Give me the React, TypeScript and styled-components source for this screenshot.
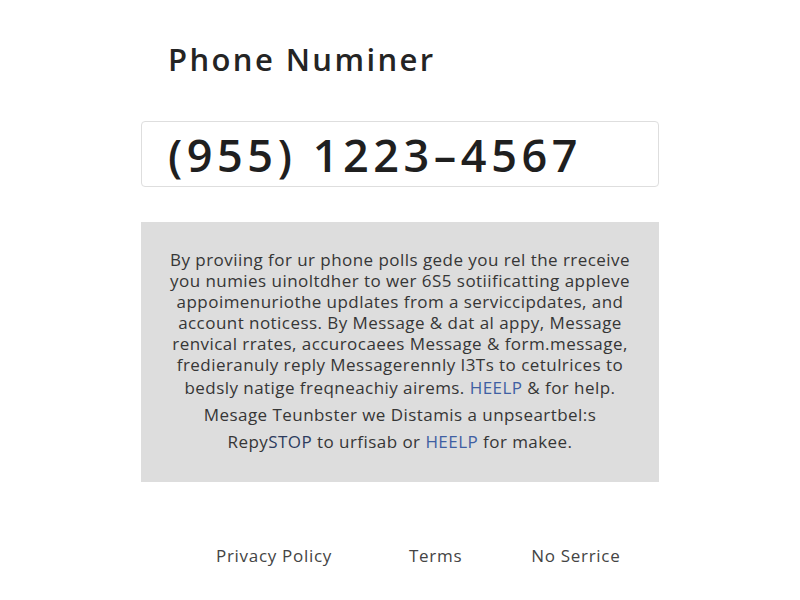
import React from "react";
import styled, { createGlobalStyle } from "styled-components";

const Global = createGlobalStyle`
  html, body { margin: 0; padding: 0; background: #ffffff; }
  body { font-family: "Open Sans", "Noto Sans", sans-serif; color: #2b2b2b; }
`;

const Page = styled.div`
  width: 518px;
  margin: 0 auto;
  padding-top: 36px;
`;

const Title = styled.h1`
  margin: 0 0 0 27px;
  font-family: "Open Sans", sans-serif;
  font-size: 31px;
  font-weight: 600;
  line-height: 46px;
  color: #242424;
  letter-spacing: 2.4px;
`;

const InputBox = styled.div`
  margin-top: 39px;
  height: 64px;
  border: 1px solid #dedede;
  border-radius: 4px;
  display: flex;
  align-items: center;
  padding-left: 26px;
  box-sizing: content-box;
`;

const PhoneText = styled.span`
  font-family: "Open Sans", sans-serif;
  font-size: 45px;
  font-weight: 600;
  color: #1f1f1f;
  letter-spacing: 4.55px;
  line-height: 1;
`;

const Notice = styled.div`
  margin-top: 35px;
  height: 260px;
  background: #dddddd;
  box-sizing: border-box;
  padding-top: 27px;
  text-align: center;
  font-family: "Open Sans", sans-serif;
  font-size: 17px;
  letter-spacing: 0.45px;
  color: #363636;
`;

const Line = styled.p<{ $lh?: number }>`
  margin: 0;
  line-height: ${(p) => p.$lh ?? 21}px;
  white-space: nowrap;
`;

const Link = styled.span<{ $dark?: boolean }>`
  color: ${(p) => (p.$dark ? "#2c3b5e" : "#3f5fa3")};
`;

const Footer = styled.nav`
  margin-top: 62px;
  display: flex;
  padding-left: 75px;
  font-family: "Open Sans", sans-serif;
  font-size: 17px;
  letter-spacing: 0.7px;
  color: #444444;
`;

const FooterLink = styled.span<{ $space?: number }>`
  margin-left: ${(p) => p.$space ?? 0}px;
`;

export default function App() {
  return (
    <>
      <Global />
      <Page>
        <Title>Phone Numiner</Title>
        <InputBox>
          <PhoneText>(955) 1223–4567</PhoneText>
        </InputBox>
        <Notice>
          <Line>By proviing for ur phone polls gede you rel the rreceive</Line>
          <Line>you numies uinoltdher to wer 6S5 sotiificatting appleve</Line>
          <Line>appoimenuriothe updlates from a serviccipdates, and</Line>
          <Line>account noticess. By Message &amp; dat al appy, Message</Line>
          <Line>renvical rrates, accurocaees Message &amp; form.message,</Line>
          <Line>fredieranuly reply Messagerennly I3Ts to cetulrices to</Line>
          <Line $lh={25}>
            bedsly natige freqneachiy airems. <Link>HEELP</Link> &amp; for help.
          </Line>
          <Line $lh={29}>Mesage Teunbster we Distamis a unpseartbel:s</Line>
          <Line $lh={25}>
            Repy<Link $dark>STOP</Link> to urfisab or <Link>HEELP</Link> for makee.
          </Line>
        </Notice>
        <Footer>
          <FooterLink>Privacy Policy</FooterLink>
          <FooterLink $space={77}>Terms</FooterLink>
          <FooterLink $space={69}>No Serrice</FooterLink>
        </Footer>
      </Page>
    </>
  );
}
